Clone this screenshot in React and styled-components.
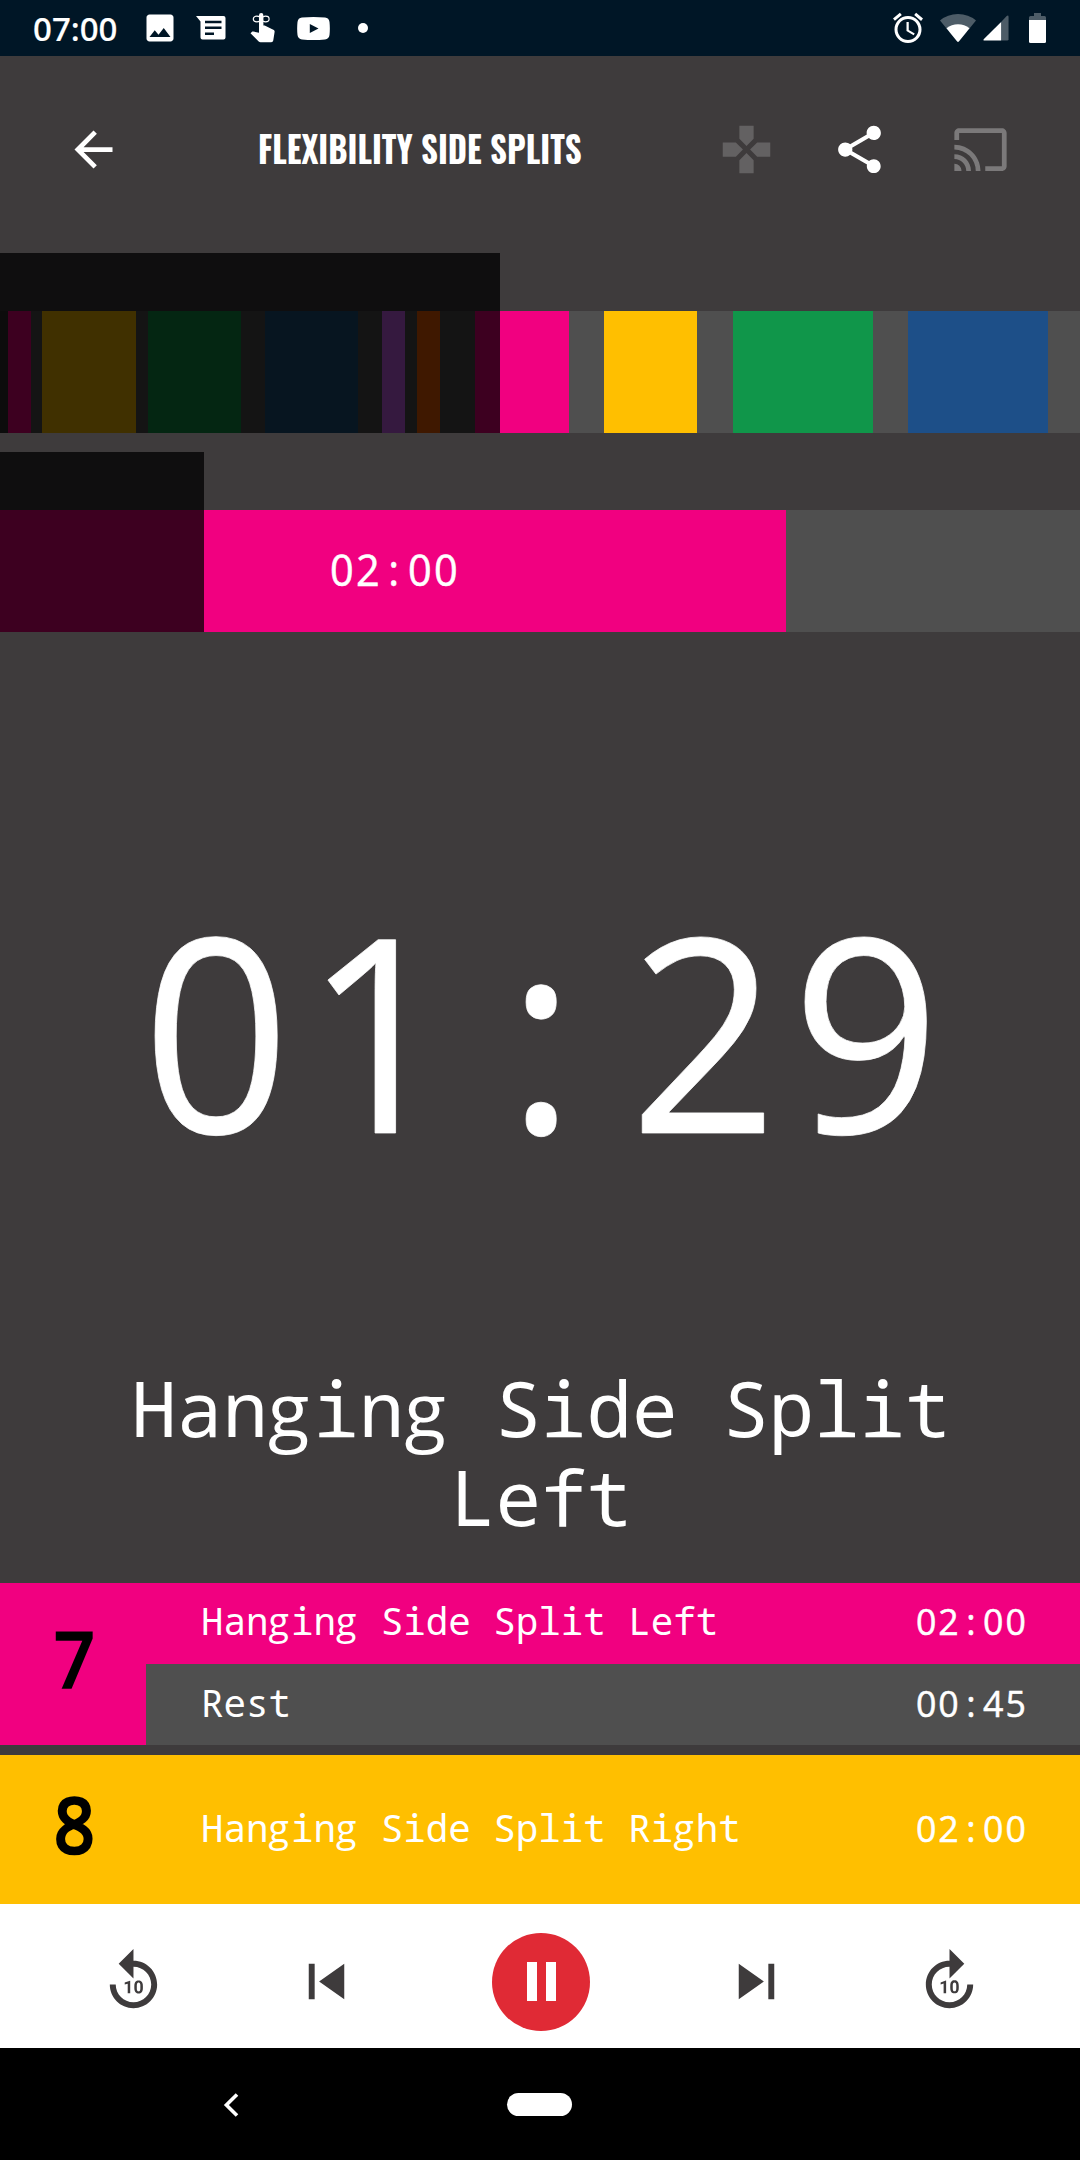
import React from "react";
import styled, { createGlobalStyle } from "styled-components";
import {
  MdAlarm,
  MdArrowBack,
  MdCast,
  MdForward10,
  MdGamepad,
  MdImage,
  MdReplay10,
  MdShare,
  MdSkipNext,
  MdSkipPrevious,
} from "react-icons/md";

const color = {
  background: "#3e3b3c",
  rest: "#4f4f4f",
  pink: "#f10080",
  yellow: "#ffbf00",
  green: "#10964a",
  blue: "#1d4f88",
  navy: "#1c5480",
  purple: "#d464fc",
  orange: "#fc6000",
  prepare: "#333333",
  pause: "#e02a35",
};

const GlobalStyle = createGlobalStyle`
  * { box-sizing: border-box; }
  body { margin: 0; background: ${color.background}; }
`;

const Screen = styled.main`
  display: flex;
  flex-direction: column;
  width: 1080px;
  height: 2160px;
  overflow: hidden;
  background: ${color.background};
  color: #fff;
  font-family: "Noto Sans Mono", "DejaVu Sans Mono", monospace;
`;

/* Status bar */

const StatusBar = styled.div`
  display: flex;
  justify-content: space-between;
  height: 56px;
  padding: 0 34px 0 33px;
  background: #001626;
`;

const StatusGroup = styled.div`
  display: flex;
  align-items: center;
`;

const Clock = styled.span`
  width: 101px;
  padding-top: 1px;
  font: 500 33px/56px "Noto Sans", "Open Sans", sans-serif;
  -webkit-text-stroke: 0.2px #fff;
`;

const StatusSlot = styled.span`
  display: flex;
  justify-content: center;
  width: ${(p) => p.$width || 51}px;
  svg { display: block; }
`;

const Dot = styled.span`
  width: 10px;
  height: 10px;
  border-radius: 50%;
  background: #fff;
`;

/* Header */

const Header = styled.header`
  display: flex;
  align-items: center;
  height: 186px;
  margin-bottom: 11px;
  padding: 0 71.5px 0 65px;
`;

const IconButton = styled.button`
  display: flex;
  padding: 0;
  border: 0;
  background: none;
  color: ${(p) => p.$color || "#fff"};
  font-size: ${(p) => p.$size || 57}px;
`;

const Title = styled.h1`
  flex: 1;
  margin: 0 0 1px 136px;
  font: 700 36.4px/1.2 Oswald, "Roboto Condensed", Roboto, sans-serif;
  white-space: nowrap;
  transform: scaleX(0.902);
  transform-origin: left center;
`;

const HeaderActions = styled.div`
  display: grid;
  grid-template-columns: 113px 121px 57px;
`;

/* Progress timelines */

const Timeline = styled.section`
  position: relative;
  height: 180px;
  padding-top: 58px;
  margin-bottom: ${(p) => p.$gap || 0}px;
`;

const Track = styled.div`
  display: flex;
  height: 122px;
  background: ${color.rest};
`;

const Segment = styled.div`
  display: flex;
  flex: none;
  align-items: center;
  justify-content: center;
  padding: 0 0 1px 2px;
  background: ${(p) => p.$color};
`;

const Elapsed = styled.div`
  position: absolute;
  top: 0;
  left: 0;
  bottom: 0;
  background: rgba(0, 0, 0, 0.75);
`;

/* Times: narrowed digits, every character centred in a cell of equal width */

const Digits = styled.span`
  --cell: 0.6263em;
  display: inline-block;
  padding-left: calc((var(--cell) - 1ch) / 2);
  font-family: "Open Sans", "Noto Sans", sans-serif;
  font-size: ${(p) => p.$size}px;
  line-height: 1.362;
  letter-spacing: calc(var(--cell) - 1ch);
  white-space: nowrap;
  transform: scaleX(0.958);
  transform-origin: ${(p) => p.$origin} center;
  -webkit-text-stroke: ${(p) => p.$stroke}px #fff;
`;

const Colon = styled.span`
  display: inline-block;
  width: var(--cell);
  margin: 0 calc((var(--cell) - 1ch) / 2) 0 calc((1ch - var(--cell)) / 2);
  letter-spacing: 0;
  text-align: center;
`;

const WideG = styled.span`
  font-family: "Open Sans", "Noto Sans", sans-serif;
  letter-spacing: 0.055em;
`;

/* Current exercise */

const Stage = styled.section`
  display: flex;
  flex: none;
  flex-direction: column;
  align-items: center;
  justify-content: space-between;
  height: 951px;
  padding: 212px 60px 42px;
`;

const Countdown = styled.div`
  padding-left: 10px;
  line-height: 0;
`;

const Exercise = styled.h2`
  margin: 0;
  padding-left: 2px;
  font-weight: 400;
  font-size: 75.9px;
  line-height: 88.5px;
  text-align: center;
`;

/* Set list */

const SetList = styled.section`
  display: flex;
  flex-direction: column;
  gap: 10px;
`;

const SetItem = styled.article`
  display: flex;
  height: ${(p) => p.$height}px;
  background: ${(p) => p.$color};
`;

const SetNumber = styled.div`
  display: flex;
  align-items: center;
  justify-content: center;
  width: 146px;
  padding: 0 0 12px 3px;
  color: #000;
  font: 400 75.8px/1 "Open Sans", "Noto Sans", sans-serif;
  transform: scaleX(0.93);
  -webkit-text-stroke: 3.6px #000;
`;

const SetRows = styled.div`
  display: grid;
  flex: 1;
  grid-auto-rows: 1fr;
`;

const Row = styled.div`
  display: flex;
  flex-wrap: wrap;
  align-content: center;
  align-items: baseline;
  justify-content: space-between;
  padding: 0 52px 5px 55px;
  background: ${(p) => p.$color};
  font-size: 37.5px;
  line-height: 51px;

  &:last-child { padding-bottom: 3px; }
`;

/* Player controls */

const Controls = styled.section`
  display: flex;
  align-items: center;
  justify-content: space-between;
  height: 144px;
  padding: 11px 95px 0 98px;
  background: #fff;
`;

const PauseButton = styled.button`
  display: flex;
  align-items: center;
  justify-content: center;
  gap: 9px;
  width: 98px;
  height: 98px;
  margin: 0 9.5px 0 9px;
  padding: 0;
  border: 0;
  border-radius: 50%;
  background: ${color.pause};
`;

const PauseBar = styled.span`
  width: 10px;
  height: 39px;
  background: #fff;
`;

/* System navigation */

const SystemNav = styled.nav`
  display: flex;
  align-items: center;
  height: 112px;
  padding: 1px 0 0 223px;
  background: #000;
  svg { display: block; }
`;

const HomePill = styled.span`
  width: 65px;
  height: 23px;
  margin-left: 268px;
  border-radius: 12px;
  background: #fff;
`;

const MessageIcon = () => (
  <svg width="30" height="24" viewBox="0 0 30 24" fill="#fff">
    <path
      fillRule="evenodd"
      d="M0 0h27.5a2 2 0 0 1 2 2v19.500a2 2 0 0 1-2 2H6.500a2 2 0 0 1-2-2V5.500zM9 4.700v2.500h16.500V4.700zM9 10.500V13h16.500v-2.500zM9 16.500V19h9v-2.500z"
    />
  </svg>
);

const ReminderIcon = () => (
  <svg width="26" height="30" viewBox="0 0 26 30" fill="#fff">
    <path d="M9 2.200a2.200 2.200 0 0 1 4.400 0v10.300h1.300l8.600 4.300c1 .5 1.500 1.200 1.300 2.300l-1.300 8.200c-.2 1.300-1 2-2.100 2H10.500c-.7 0-1.300-.3-1.800-.8L.500 20.200l1.300-1.300c.4-.4.900-.5 1.400-.4L9 19.700z" />
    <g fill="none" stroke="#fff" strokeWidth="1.200">
      <ellipse cx="6.800" cy="6" rx="3.500" ry="2.800" />
      <ellipse cx="15.600" cy="6" rx="3.500" ry="2.800" />
    </g>
  </svg>
);

const VideoIcon = () => (
  <svg width="33" height="23" viewBox="0 0 33 23" fill="#fff">
    <path
      fillRule="evenodd"
      d="M5 .600Q16.500-.500 28 .600Q32 1 32.500 5Q33.200 11.500 32.500 18Q32 22 28 22.400Q16.500 23.500 5 22.400Q1 22 .500 18Q-.200 11.500.500 5Q1 1 5 .600zM12.800 7v9l8.700-4.500z"
    />
  </svg>
);

const WifiIcon = () => (
  <svg width="36" height="28" viewBox="0 0 36 28" fill="#fff">
    <path opacity=".3" d="M0 6.500Q7.500 0 18 0T36 6.500L19 27.300q-1 1-2 0z" />
    <path d="M6.500 14.300Q11.500 10.300 18 10.300T29.500 14.300L19 27.300q-1 1-2 0z" />
  </svg>
);

const SignalIcon = () => (
  <svg width="28" height="28" viewBox="0 0 28 28" fill="#fff">
    <path opacity=".3" d="M19.500 7.500L25.500 1.200Q27.500-.200 27.500 2V26Q27.500 27.500 26 27.500H19.500z" />
    <path d="M19.500 7.500V27.500H1.500Q-.300 27.300 1 25.800z" />
  </svg>
);

const BatteryIcon = () => (
  <svg width="17" height="30" viewBox="0 0 17 30" fill="#fff">
    <path opacity=".3" d="M5 0h7v3h3.500q1.500 0 1.500 1.500V7H0V4.500Q0 3 1.500 3H5z" />
    <path d="M0 7h17v21.500q0 1.500-1.500 1.500h-14Q0 30 0 28.500z" />
  </svg>
);

const segments = [
  [7.6, color.prepare],
  [23.2, color.pink],
  [11.7, color.rest],
  [93.6, color.yellow],
  [11.7, color.rest],
  [93.6, color.green],
  [23.4, color.rest],
  [93.6, color.navy],
  [23.4, color.rest],
  [23.4, color.purple],
  [11.7, color.rest],
  [23.4, color.orange],
  [35.1, color.rest],
  [93.6, color.pink],
  [35.1, color.rest],
  [93.3, color.yellow],
  [35.4, color.rest],
  [140.4, color.green],
  [35.1, color.rest],
  [139.9, color.blue],
];

const sets = [
  {
    number: 7,
    color: color.pink,
    height: 162,
    rows: [
      { name: "Hanging Side Split Left", time: "02:00" },
      { name: "Rest", time: "00:45", color: color.rest },
    ],
  },
  {
    number: 8,
    color: color.yellow,
    height: 149,
    rows: [{ name: "Hanging Side Split Right", time: "02:00" }],
  },
];

function Time({ value, size, stroke = 0.5, origin = "center" }) {
  const [minutes, seconds] = value.split(":");
  return (
    <Digits $size={size} $stroke={stroke} $origin={origin}>
      {minutes}
      <Colon>:</Colon>
      {seconds}
    </Digits>
  );
}

function Label({ children }) {
  return (
    <span>
      {children.split(/(g)/).map((part, i) =>
        part === "g" ? <WideG key={i}>g</WideG> : part
      )}
    </span>
  );
}

export default function App() {
  return (
    <Screen>
      <GlobalStyle />
      <StatusBar>
        <StatusGroup>
          <Clock>07:00</Clock>
          <StatusSlot><MdImage size={36} /></StatusSlot>
          <StatusSlot><MessageIcon /></StatusSlot>
          <StatusSlot $width={54}><ReminderIcon /></StatusSlot>
          <StatusSlot $width={46}><VideoIcon /></StatusSlot>
          <StatusSlot $width={54}><Dot /></StatusSlot>
        </StatusGroup>
        <StatusGroup>
          <StatusSlot $width={50}><MdAlarm size={36} /></StatusSlot>
          <StatusSlot $width={50}><WifiIcon /></StatusSlot>
          <StatusSlot $width={26}><SignalIcon /></StatusSlot>
          <StatusSlot $width={20} />
          <BatteryIcon />
        </StatusGroup>
      </StatusBar>

      <Header>
        <IconButton aria-label="Back"><MdArrowBack /></IconButton>
        <Title>FLEXIBILITY SIDE SPLITS</Title>
        <HeaderActions>
          <IconButton $color="#636162" aria-label="Remote"><MdGamepad /></IconButton>
          <IconButton aria-label="Share"><MdShare /></IconButton>
          <IconButton $color="#7b797a" aria-label="Cast"><MdCast /></IconButton>
        </HeaderActions>
      </Header>

      <Timeline $gap={19}>
        <Track>
          {segments.map(([width, fill], i) => (
            <Segment key={i} $color={fill} style={{ width }} />
          ))}
        </Track>
        <Elapsed style={{ width: 500 }} />
      </Timeline>

      <Timeline>
        <Track>
          <Segment $color={color.pink} style={{ width: 786.4 }}>
            <Time value="02:00" size={43.3} />
          </Segment>
        </Track>
        <Elapsed style={{ width: 204 }} />
      </Timeline>

      <Stage>
        <Countdown><Time value="01:29" size={270.8} stroke={0.8} /></Countdown>
        <Exercise>
          <Label>Hanging Side Split Left</Label>
        </Exercise>
      </Stage>

      <SetList>
        {sets.map((set) => (
          <SetItem key={set.number} $color={set.color} $height={set.height}>
            <SetNumber>{set.number}</SetNumber>
            <SetRows>
              {set.rows.map((row) => (
                <Row key={row.name} $color={row.color || "transparent"}>
                  <Label>{row.name}</Label>
                  <Time value={row.time} size={37.3} origin="right" />
                </Row>
              ))}
            </SetRows>
          </SetItem>
        ))}
      </SetList>

      <Controls>
        <IconButton $size={71} $color="#3e3b3c" aria-label="Back 10 seconds"><MdReplay10 /></IconButton>
        <IconButton $size={71} $color="#3e3b3c" aria-label="Previous"><MdSkipPrevious /></IconButton>
        <PauseButton aria-label="Pause"><PauseBar /><PauseBar /></PauseButton>
        <IconButton $size={71} $color="#3e3b3c" aria-label="Next"><MdSkipNext /></IconButton>
        <IconButton $size={71} $color="#3e3b3c" aria-label="Forward 10 seconds"><MdForward10 /></IconButton>
      </Controls>

      <SystemNav>
        <svg width="16" height="24" viewBox="0 0 16 24" fill="none" stroke="#fff" strokeWidth="3.6">
          <path d="M14 1.500L3.400 12L14 22.500" />
        </svg>
        <HomePill />
      </SystemNav>
    </Screen>
  );
}
